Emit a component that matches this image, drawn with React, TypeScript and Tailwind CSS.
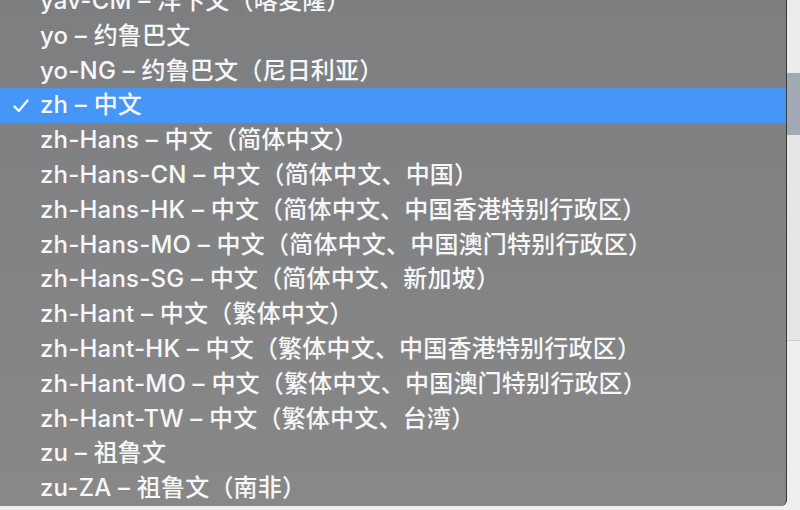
import React from "react";

const items: string[] = [
  "yav-CM – 洋卞文（喀麦隆）",
  "yo – 约鲁巴文",
  "yo-NG – 约鲁巴文（尼日利亚）",
  "zh – 中文",
  "zh-Hans – 中文（简体中文）",
  "zh-Hans-CN – 中文（简体中文、中国）",
  "zh-Hans-HK – 中文（简体中文、中国香港特别行政区）",
  "zh-Hans-MO – 中文（简体中文、中国澳门特别行政区）",
  "zh-Hans-SG – 中文（简体中文、新加坡）",
  "zh-Hant – 中文（繁体中文）",
  "zh-Hant-HK – 中文（繁体中文、中国香港特别行政区）",
  "zh-Hant-MO – 中文（繁体中文、中国澳门特别行政区）",
  "zh-Hant-TW – 中文（繁体中文、台湾）",
  "zu – 祖鲁文",
  "zu-ZA – 祖鲁文（南非）",
];

export default function App() {
  return (
    <div
      className="w-[800px] h-[510px] overflow-hidden flex bg-[#efefef]"
      style={{ fontFamily: '"Inter", "Noto Sans CJK SC", sans-serif' }}
    >
      <div className="w-[787px] h-[506px] shrink-0 flex flex-col border-r border-[#3a3a3a] rounded-br-[6px] overflow-hidden bg-gradient-to-b from-[#7d7e80] to-[#888888]">
        <div className="flex flex-col -mt-[16.4px]">
          {items.map((t, i) => {
            const sel = i === 3;
            return (
              <div
                key={i}
                className={`h-[34.8px] shrink-0 flex items-center text-[24px] font-medium tracking-[0.2px] text-[#f7f7f7] whitespace-nowrap ${
                  sel ? "bg-[#4596f7]" : ""
                }`}
              >
                <div className="w-[40px] shrink-0 flex justify-center pl-[2px]">
                  {sel && (
                    <svg width="16" height="14" viewBox="0 0 16 14" className="mt-[1px]">
                      <path
                        d="M1.5 7.5 L5.8 12 L14.5 1.5"
                        fill="none"
                        stroke="#ffffff"
                        strokeWidth="2.2"
                        strokeLinecap="round"
                        strokeLinejoin="round"
                      />
                    </svg>
                  )}
                </div>
                <span>{t}</span>
              </div>
            );
          })}
        </div>
      </div>
      <div className="flex-1 flex flex-col">
        <div className="h-[73px] bg-[#ececec]" />
        <div className="h-[62px] bg-[#a2aab6]" />
        <div className="h-[206px] bg-[#e6e6e6] border-b border-[#cfcfcf]" />
        <div className="flex-1 bg-[#efefef]" />
      </div>
    </div>
  );
}
